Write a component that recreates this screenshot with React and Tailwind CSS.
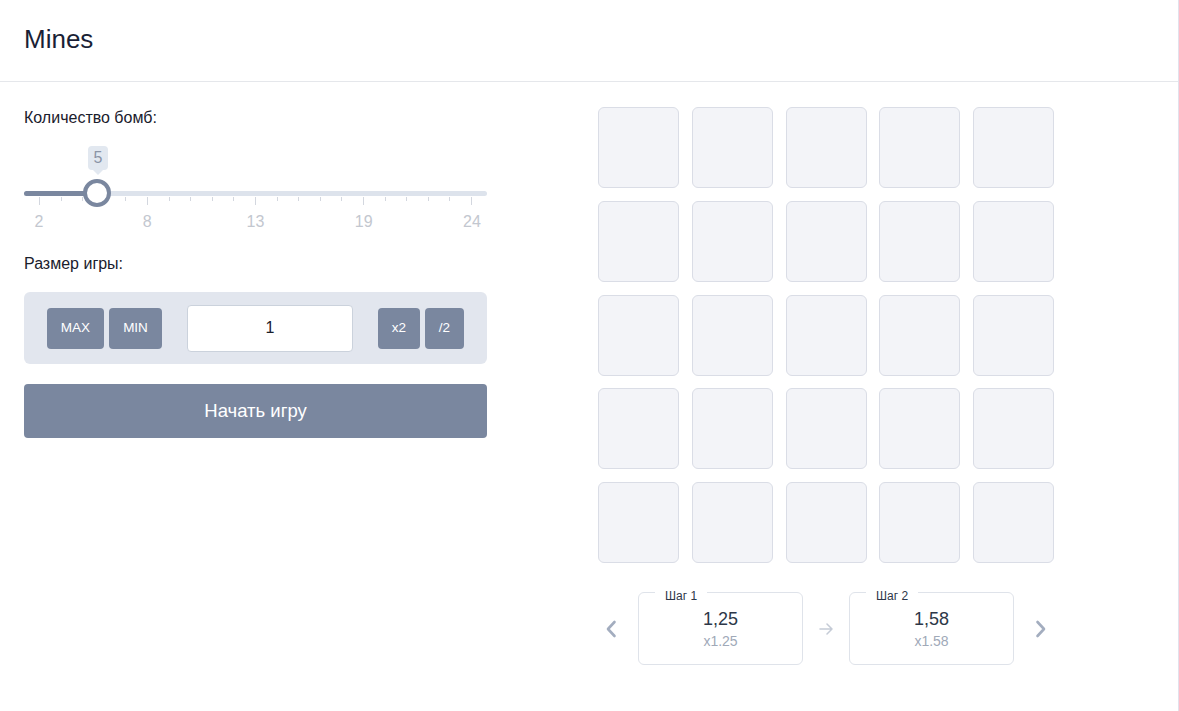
import React from 'react';

const font = { fontFamily: '"Liberation Sans", Arial, sans-serif' };

const ticks = Array.from({ length: 21 }, (_, i) => i);
const tickLabels = ['2', '8', '13', '19', '24'];
const cells = Array.from({ length: 25 }, (_, i) => i);

const steps = [
  { id: 1, title: 'Шаг 1', value: '1,25', coef: 'x1.25' },
  { id: 2, title: 'Шаг 2', value: '1,58', coef: 'x1.58' },
];

function Chevron({ dir }) {
  return (
    <svg width="14" height="20" viewBox="0 0 14 20" fill="none" stroke="#a3adbf" strokeWidth="2.6" strokeLinecap="round" strokeLinejoin="round">
      {dir === 'left' ? <path d="M10.5 3 L4 10 L10.5 17" /> : <path d="M3.5 3 L10 10 L3.5 17" />}
    </svg>
  );
}

function StepCard({ step }) {
  return (
    <div className="relative w-[165px] h-[73px] rounded-md border border-[#dfe3ea] flex flex-col items-center pt-[15px]">
      <span className="absolute left-[16px] top-[-5px] bg-white px-[10px] text-[12px] leading-[16px] text-[#2d3748]">
        {step.title}
      </span>
      <span className="text-[18px] leading-[22px] text-[#2d3748]">{step.value}</span>
      <span className="mt-[1px] text-[14px] leading-[20px] text-[#a0a9b8]">{step.coef}</span>
    </div>
  );
}

export default function App() {
  return (
    <div className="w-full min-h-screen bg-white border-r border-[#e2e1ec]" style={font}>
      {/* Header */}
      <div className="h-[82px] border-b border-[#e5e7eb] flex items-center px-6 pb-[2px]">
        <h1 className="text-[26px] text-[#1a1f36]">Mines</h1>
      </div>

      <div className="flex pl-6">
        {/* Left panel */}
        <div className="w-[463px] pt-[24px]">
          <p className="text-[16px] leading-[24px] text-[#1a202c]">Количество бомб:</p>

          {/* Slider */}
          <div className="mt-[16px] pl-[64px]">
            <div className="relative w-[20px] h-[24px] rounded bg-[#e2e8f0] flex items-center justify-center text-[16px] text-[#8a94a6]">
              5
              <span className="absolute left-1/2 -translate-x-1/2 top-full w-0 h-0 border-l-[5px] border-r-[5px] border-t-[5px] border-l-transparent border-r-transparent border-t-[#e2e8f0]" />
            </div>
          </div>
          <div className="relative mt-[21px] h-[5px] rounded-full bg-[#dde3ec]">
            <div className="h-full w-[73px] rounded-l-full bg-[#7a879f]" />
            <div className="absolute left-[59px] top-[-12px] w-[28px] h-[28px] rounded-full border-4 border-[#7a879f] bg-white" />
          </div>
          <div className="mt-[1px] px-[15px] flex justify-between items-start">
            {ticks.map((t) => (
              <span key={t} className={`w-px bg-[#d3d7df] ${t % 5 === 0 ? 'h-[8px]' : 'h-[4px]'}`} />
            ))}
          </div>
          <div className="mt-[6px] px-[15px] flex justify-between">
            {tickLabels.map((l) => (
              <span key={l} className="w-0 flex justify-center whitespace-nowrap text-[16px] leading-[22px] text-[#c3c7cf]">
                {l}
              </span>
            ))}
          </div>

          <p className="mt-[19px] text-[16px] leading-[24px] text-[#1a202c]">Размер игры:</p>

          {/* Bet size */}
          <div className="mt-[16px] h-[72px] rounded-md bg-[#e2e6ee] flex items-center px-[23px]">
            <button className="w-[57px] h-[41px] rounded bg-[#7a879f] text-white text-[13.5px]">MAX</button>
            <button className="ml-[5px] w-[53px] h-[41px] rounded bg-[#7a879f] text-white text-[13.5px]">MIN</button>
            <div className="ml-[25px] w-[166px] h-[47px] rounded border border-[#cbd2dc] bg-white flex items-center justify-center text-[16px] text-[#1a202c]">
              1
            </div>
            <button className="ml-[25px] w-[42px] h-[41px] rounded bg-[#7a879f] text-white text-[13.5px]">x2</button>
            <button className="ml-[5px] w-[39px] h-[41px] rounded bg-[#7a879f] text-white text-[13.5px]">/2</button>
          </div>

          <button className="mt-[20px] w-full h-[54px] rounded bg-[#7a879f] text-white text-[18.5px]">
            Начать игру
          </button>
        </div>

        {/* Right panel */}
        <div className="ml-[111px] pt-[25px]">
          <div className="grid grid-cols-5 gap-x-[12.75px] gap-y-[12.75px] w-[456px]">
            {cells.map((c) => (
              <div key={c} className="w-[81px] h-[81px] rounded-md bg-[#f3f4f8] border border-[#dadde6]" />
            ))}
          </div>

          <div className="mt-[29px] flex items-center justify-center">
            <Chevron dir="left" />
            <div className="ml-[20px]">
              <StepCard step={steps[0]} />
            </div>
            <svg className="mx-[16px]" width="14" height="12" viewBox="0 0 14 12" fill="none" stroke="#c5cbd6" strokeWidth="1.5" strokeLinecap="round" strokeLinejoin="round">
              <path d="M1 6 H13 M8 1 L13 6 L8 11" />
            </svg>
            <StepCard step={steps[1]} />
            <div className="ml-[20px]">
              <Chevron dir="right" />
            </div>
          </div>
        </div>
      </div>
    </div>
  );
}
